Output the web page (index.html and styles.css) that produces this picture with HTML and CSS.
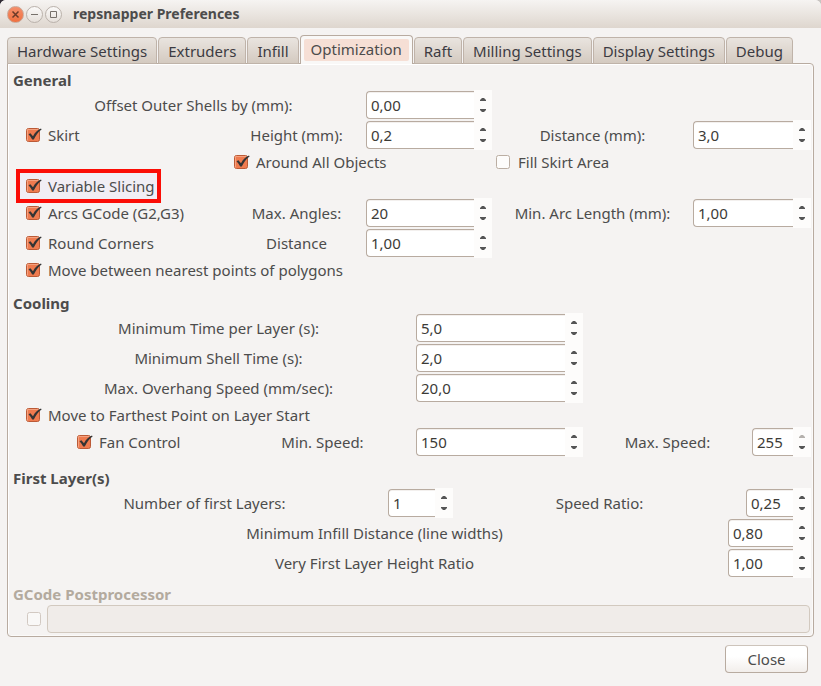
FILE: index.html
```html
<!DOCTYPE html>
<html lang="en">
<head>
<meta charset="utf-8">
<meta name="viewport" content="width=device-width, initial-scale=1">
<title>repsnapper Preferences</title>
<link rel="stylesheet" href="styles.css">
<script src="spin.js" defer></script>
</head>
<body>
<div class="window">
  <header class="titlebar">
    <button type="button" class="winbtn winbtn-close" aria-label="Close window"><svg viewBox="0 0 17 17"><path d="M5.5 5.5l6 6M11.5 5.5l-6 6"/></svg></button>
    <button type="button" class="winbtn" aria-label="Minimize"><svg viewBox="0 0 17 17"><path d="M5 8.5h7"/></svg></button>
    <button type="button" class="winbtn" aria-label="Maximize"><svg viewBox="0 0 17 17"><path d="M5.5 5.5h6v6h-6z"/></svg></button>
    <h1>repsnapper Preferences</h1>
  </header>

  <main class="body">
    <div class="tabs" role="tablist">
      <button type="button" role="tab" class="tab">Hardware Settings</button>
      <button type="button" role="tab" class="tab">Extruders</button>
      <button type="button" role="tab" class="tab">Infill</button>
      <button type="button" role="tab" class="tab active" aria-selected="true"><span>Optimization</span></button>
      <button type="button" role="tab" class="tab">Raft</button>
      <button type="button" role="tab" class="tab">Milling Settings</button>
      <button type="button" role="tab" class="tab">Display Settings</button>
      <button type="button" role="tab" class="tab">Debug</button>
    </div>

    <form class="panel">
      <section class="group">
        <h2>General</h2>
        <div class="row general">
          <label class="caption wide" for="offset">Offset Outer Shells by (mm):</label>
          <span class="spin"><input type="text" id="offset" value="0,00"></span>
        </div>
        <div class="row general">
          <label class="check"><input type="checkbox" checked>Skirt</label>
          <label class="caption" for="height">Height (mm):</label>
          <span class="spin"><input type="text" id="height" value="0,2"></span>
          <label class="caption" for="distance">Distance (mm):</label>
          <span class="spin"><input type="text" id="distance" value="3,0"></span>
        </div>
        <div class="row general options">
          <label class="check around"><input type="checkbox" checked>Around All Objects</label>
          <label class="check fill"><input type="checkbox">Fill Skirt Area</label>
        </div>
        <div class="row options">
          <label class="check marked"><input type="checkbox" checked>Variable Slicing</label>
        </div>
        <div class="row general">
          <label class="check"><input type="checkbox" checked>Arcs GCode (G2,G3)</label>
          <label class="caption" for="angles">Max. Angles:</label>
          <span class="spin"><input type="text" id="angles" value="20"></span>
          <label class="caption" for="arclen">Min. Arc Length (mm):</label>
          <span class="spin"><input type="text" id="arclen" value="1,00"></span>
        </div>
        <div class="row general">
          <label class="check"><input type="checkbox" checked>Round Corners</label>
          <label class="caption" for="corner">Distance</label>
          <span class="spin"><input type="text" id="corner" value="1,00"></span>
        </div>
        <div class="row options">
          <label class="check"><input type="checkbox" checked>Move between nearest points of polygons</label>
        </div>
      </section>

      <section class="group">
        <h2>Cooling</h2>
        <div class="row cooling">
          <label class="caption wide" for="layertime">Minimum Time per Layer (s):</label>
          <span class="spin"><input type="text" id="layertime" value="5,0"></span>
        </div>
        <div class="row cooling">
          <label class="caption wide" for="shelltime">Minimum Shell Time (s):</label>
          <span class="spin"><input type="text" id="shelltime" value="2,0"></span>
        </div>
        <div class="row cooling">
          <label class="caption wide" for="overhang">Max. Overhang Speed (mm/sec):</label>
          <span class="spin"><input type="text" id="overhang" value="20,0"></span>
        </div>
        <div class="row options">
          <label class="check"><input type="checkbox" checked>Move to Farthest Point on Layer Start</label>
        </div>
        <div class="row cooling">
          <label class="check nested"><input type="checkbox" checked>Fan Control</label>
          <label class="caption" for="minspeed">Min. Speed:</label>
          <span class="spin"><input type="text" id="minspeed" value="150"></span>
          <label class="caption" for="maxspeed">Max. Speed:</label>
          <span class="spin at-max"><input type="text" id="maxspeed" value="255"></span>
        </div>
      </section>

      <section class="group">
        <h2>First Layer(s)</h2>
        <div class="row layers">
          <label class="caption first" for="layers">Number of first Layers:</label>
          <span class="spin"><input type="text" id="layers" value="1"></span>
          <label class="caption" for="ratio">Speed Ratio:</label>
          <span class="spin"><input type="text" id="ratio" value="0,25"></span>
        </div>
        <div class="row single">
          <label class="caption first" for="infill">Minimum Infill Distance (line widths)</label>
          <span class="spin"><input type="text" id="infill" value="0,80"></span>
        </div>
        <div class="row single">
          <label class="caption first" for="vfirst">Very First Layer Height Ratio</label>
          <span class="spin"><input type="text" id="vfirst" value="1,00"></span>
        </div>
      </section>

      <section class="group disabled">
        <h2 id="post">GCode Postprocessor</h2>
        <div class="row post">
          <input type="checkbox" disabled aria-labelledby="post">
          <input type="text" class="entry" disabled aria-labelledby="post">
        </div>
      </section>
    </form>

    <div class="actions"><button type="button" class="close">Close</button></div>
  </main>
</div>
</body>
</html>
```
FILE: styles.css
```css
* { box-sizing: border-box; }

body {
  margin: 0;
  background: linear-gradient(90deg, #2f2b33, #c8c4c0);
  color: #4c4c4c;
  font: 15px/20px "Noto Sans", sans-serif;
}

button, input { font: inherit; color: inherit; margin: 0; }

.window {
  min-height: 100vh;
  background: #f5f3f2;
  border-radius: 6px 6px 0 0;
  overflow: hidden;
}

.titlebar {
  display: flex;
  align-items: center;
  gap: 2px;
  height: 28px;
  padding: 0 7px;
  background: linear-gradient(#f6f4f2, #ded6ce);
}

.titlebar h1 {
  margin: 0 0 0 9px;
  font-size: 14px;
  line-height: 20px;
  font-weight: bold;
}

.winbtn {
  width: 17px;
  height: 17px;
  padding: 0;
  border: 1px solid #b9b1aa;
  border-radius: 50%;
  background: linear-gradient(#fbfaf9, #e6e0da);
}

.winbtn-close {
  border-color: #c9a797;
  background: linear-gradient(#f58f6b, #f0703f);
}

.winbtn svg {
  display: block;
  margin: -1px;
  width: 17px;
  height: 17px;
  fill: none;
  stroke: #77716b;
}

.winbtn-close svg { stroke: #6b3a28; stroke-width: 1.5; }

.body { padding: 7px 7px 13px; }

.tabs {
  display: flex;
  align-items: flex-end;
  gap: 1px;
  position: relative;
  z-index: 1;
  margin-bottom: -1px;
}

.tab {
  height: 27px;
  padding: 0 9px;
  border: 1px solid #bfb3a9;
  border-radius: 4px 4px 0 0;
  background: linear-gradient(#e9e4df, #d4cac0);
  color: #3c3b42;
  white-space: nowrap;
}

.tab.active {
  height: 29px;
  padding: 3px 3px 3px;
  border-bottom: 0;
  border-color: #b8aba0;
  background: #f9f8f7;
  color: #4c4c4c;
}

.tab.active span {
  display: block;
  padding: 0 7px 2px;
  border-radius: 2px;
  background: #f6dfd5;
}

.panel {
  padding: 6px 2px 2px 5px;
  border: 1px solid #b8aba0;
  border-radius: 0 4px 4px 4px;
  box-shadow: inset 1px 1px #fff, inset -1px -1px #fbfaf9;
}

.group + .group { margin-top: 11px; }
.group.disabled { margin-top: 6px; color: #b3aa9e; }

h2 { margin: 0; font-size: 15px; line-height: 20px; }

.row { display: grid; align-items: center; min-height: 30px; }
.row.options { min-height: 24px; }
.general { grid-template-columns: 214fr 139fr 126fr 201fr 118fr; }
.cooling { grid-template-columns: 216fr 187fr 167fr 169fr 59fr; }
.layers { grid-template-columns: 375fr 65fr 293fr 65fr; }
.single { grid-template-columns: 715fr 83fr; }

.caption { text-align: center; white-space: nowrap; }
.caption.wide { grid-column: span 2; padding-left: 8px; }
.caption.first { padding-left: 8px; }

.check {
  display: flex;
  align-items: center;
  gap: 6px;
  justify-self: start;
  padding-left: 13px;
  white-space: nowrap;
}

.check.around { grid-column: 2 / span 2; padding-left: 7px; }
.check.fill { grid-column: 4 / span 2; padding-left: 4px; }
.check.nested { padding-left: 64px; }

.check.marked {
  margin: -5px 0 -5px 3px;
  padding: 3px 2px 3px 6px;
  border: 4px solid #fb0d06;
  background: #f1eef4;
}

input[type="checkbox"] {
  appearance: none;
  width: 16px;
  height: 16px;
  flex: none;
  background: url("data:image/svg+xml,%3Csvg xmlns='http://www.w3.org/2000/svg' viewBox='0 0 16 16'%3E%3Crect x='.5' y='1.5' width='13' height='13' rx='2' fill='%23fdfcfb' stroke='%23bbaea3'/%3E%3C/svg%3E") no-repeat;
}

input[type="checkbox"]:checked {
  background-image: url("data:image/svg+xml,%3Csvg xmlns='http://www.w3.org/2000/svg' viewBox='0 0 16 16'%3E%3Crect x='.5' y='1.5' width='13' height='13' rx='2' fill='%23ef7b4f' stroke='%23bb5a36'/%3E%3Cpath d='M1.5 13.5v-11h11' fill='none' stroke='%23f5a17f'/%3E%3Cpath d='M2.5 7.2L4.4 6.2 7 9.2C9 5.6 11.5 3.2 15 1.6L15.6 2.4C12 5 9.700 8.500 7.800 12.600H6.200C5.200 10.500 4 8.800 2.500 7.200z' fill='%23343434'/%3E%3C/svg%3E");
}

input[type="checkbox"]:disabled { opacity: .6; }

.spin { display: flex; min-width: 0; height: 30px; align-items: center; }

.spin input, .entry {
  min-width: 0;
  width: 100%;
  height: 28px;
  padding: 0 4px;
  border: 1px solid #b8aba0;
  border-radius: 4px;
  background: #fff;
  box-shadow: inset 0 1px #f3f0ee;
}

.spin input { flex: 1; border-right: 0; border-radius: 4px 0 0 4px; color: #3c3b37; }

.post { grid-template-columns: 34px 1fr; padding-right: 1px; }
.post input[type="checkbox"] { margin-left: 14px; }
.entry:disabled { border-color: #d2c9bf; background: #f0ece9; box-shadow: none; }

.stepper { display: flex; flex-direction: column; flex: none; width: 18px; height: 30px; padding: 4px 0; background: #fdfcfb; }
.stepper button { display: flex; align-items: center; justify-content: center; height: 11px; padding: 0; border: 0; background: none; }
.stepper svg { width: 6px; height: 3px; flex: none; fill: #555; }
.at-max .stepper button:first-child svg { fill: #b5b1ad; }

.actions { display: flex; justify-content: flex-end; padding: 8px 6px 0 0; }

.close {
  width: 83px;
  height: 28px;
  padding: 0;
  border: 1px solid #b8aba0;
  border-top-color: #cdc4bb;
  border-radius: 4px;
  background: linear-gradient(#fff 40%, #f2eeeb);
}
```
FILE: spin.js
```js
const arrow = (d) => `<svg viewBox="0 0 6 3"><path d="${d}"/></svg>`;
document.querySelectorAll(".spin").forEach((spin) => {
  const stepper = document.createElement("span");
  stepper.className = "stepper";
  stepper.innerHTML =
    `<button type="button" aria-label="Increase">${arrow("M0 3h6V2L4 0H2L0 2z")}</button>` +
    `<button type="button" aria-label="Decrease">${arrow("M0 0h6v1L4 3H2L0 1z")}</button>`;
  spin.append(stepper);
});
```
